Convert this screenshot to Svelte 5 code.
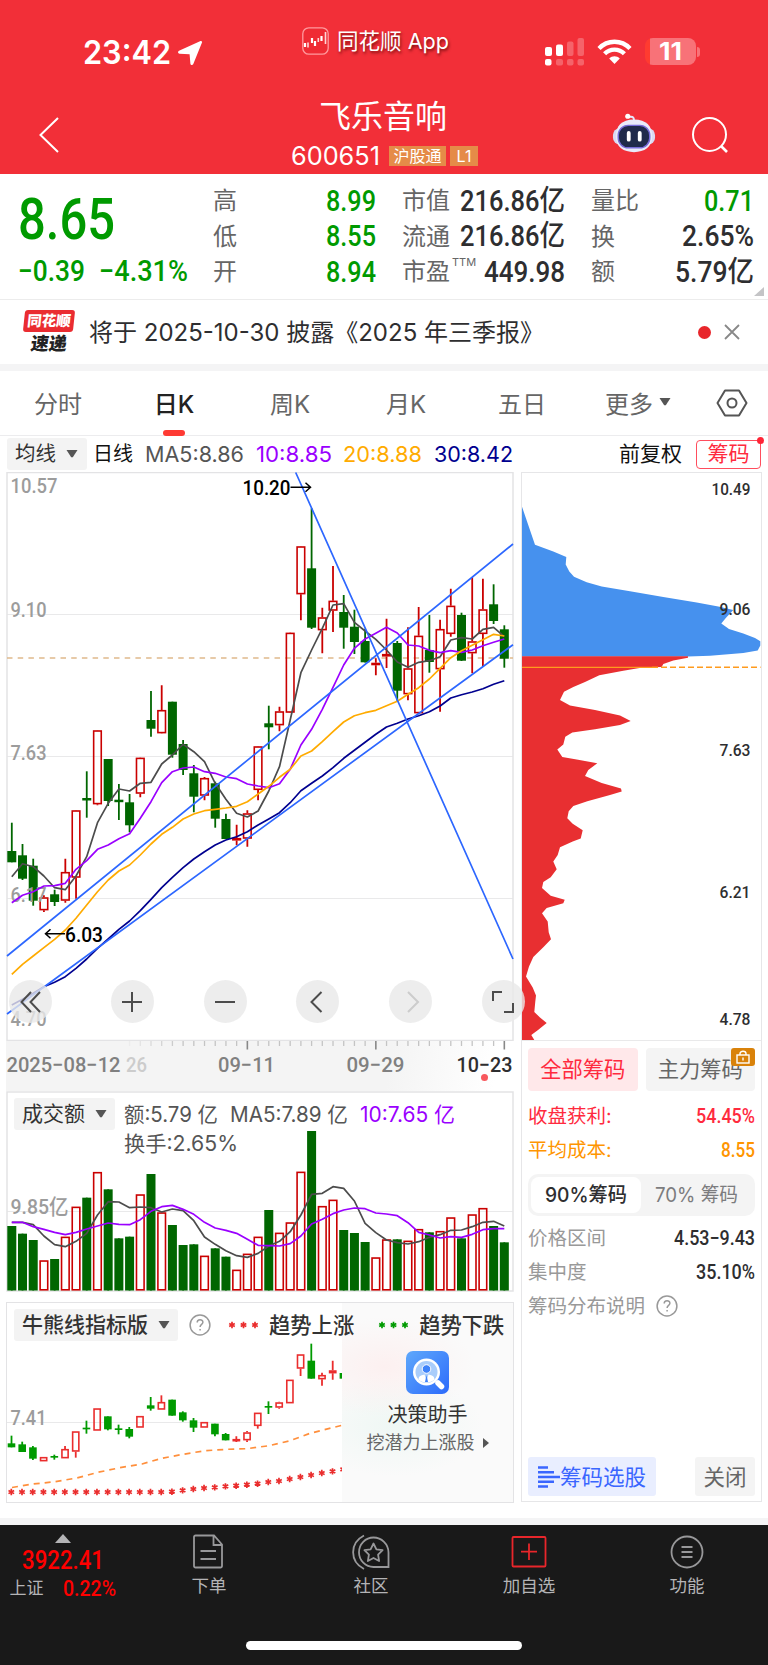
<script lang="ts">
  type Candle = [up: number, top: number, bottom: number, high: number, low: number];

  const STEP = 10.707;
  const xAt = (i: number) => 11.8 + i * STEP;
  const toLine = (values: number[]) =>
    values.map((v, i) => `${xAt(i).toFixed(1)},${v}`).join(' ');

  const stats = [
    [
      { label: '高', value: '8.99', width: 50, tone: 'down' },
      { label: '低', value: '8.55', width: 50, tone: 'down' },
      { label: '开', value: '8.94', width: 50, tone: 'down' }
    ],
    [
      { label: '市值', value: '216.86亿', width: 105, tone: 'ink' },
      { label: '流通', value: '216.86亿', width: 105, tone: 'ink' },
      { label: '市盈', sup: 'TTM', value: '449.98', width: 81, tone: 'ink' }
    ],
    [
      { label: '量比', value: '0.71', width: 50, tone: 'down' },
      { label: '换', value: '2.65%', width: 72, tone: 'ink' },
      { label: '额', value: '5.79亿', width: 79, tone: 'ink' }
    ]
  ];

  const tabs = ['分时', '日K', '周K', '月K', '五日'];
  let activeTab = $state('日K');

  // [up, body top, body bottom, high, low]
  const candles: Candle[] = [
    [0, 851, 862.3, 822.7, 862.3], [0, 855.3, 878.7, 844, 880], [0, 865.7, 900.7, 858.7, 905.7],
    [1, 897.3, 910.3, 895.3, 912], [0, 894.3, 902, 889.7, 906], [1, 872, 900.7, 858.7, 902.7],
    [1, 810.3, 877.7, 810, 898.7], [0, 798, 800.5, 771.3, 817.7], [1, 730.3, 804.3, 730, 805.3],
    [0, 759, 801, 759, 806], [0, 799.7, 802.2, 784, 820], [0, 802.3, 825.3, 794, 832.3],
    [1, 757.7, 793.7, 757.5, 797.3], [0, 720, 728.7, 691, 736.7], [1, 710, 733.3, 685.3, 733.5],
    [0, 701.7, 754.7, 701.7, 757.7], [0, 744, 770, 740, 775], [0, 773.3, 796.7, 765, 812.3],
    [1, 778, 795.7, 777, 800.3], [0, 783.3, 818.7, 781.7, 827.7], [0, 819, 839, 813.7, 839],
    [1, 838, 840.5, 824.7, 845.3], [1, 813.3, 838.7, 810.3, 846.7], [1, 746.3, 790, 746, 800.3],
    [0, 723.3, 727.3, 705.7, 749.3], [1, 711.3, 725.3, 706.7, 731.3], [1, 632.7, 712.7, 632.5, 713],
    [1, 546.3, 594.3, 546, 620.3], [0, 568.3, 627.7, 508.3, 629], [1, 617.3, 630.3, 607.7, 653.3],
    [1, 600.7, 610.7, 566, 632], [0, 612, 627.7, 595, 648.7], [0, 626.7, 642, 609.7, 654],
    [0, 641, 662.3, 628.7, 662.5], [1, 662.8, 665.2, 658.3, 675.3], [1, 654, 656.5, 618.7, 668],
    [0, 643, 690.7, 641, 700.7], [1, 668.3, 694.3, 627.3, 700.3], [1, 635.7, 713.3, 607, 714],
    [0, 650, 662, 615, 672.7], [1, 629, 669.3, 619.7, 711.7], [1, 605.7, 634, 588.7, 636.7],
    [0, 615, 660.7, 612.7, 661], [1, 641.3, 653.3, 577, 673.3], [1, 609.3, 634, 578.7, 666.7],
    [0, 604.3, 621, 584.3, 624], [0, 629.3, 658.7, 625.3, 667.7]
  ];

  const ma5 = [
    876.7, 863.7, 866.7, 876, 887.7, 889.7, 876, 856.7, 822.7, 803.3, 789, 791, 783.3, 782.3, 764,
    755, 744.3, 751.7, 761.7, 783.3, 799.3, 813.3, 817, 811, 791, 766.7, 720, 672.7, 650, 628.3, 605,
    603.7, 622.3, 631, 639.3, 650, 662, 667.3, 662.3, 660.7, 656.7, 640, 637.7, 639, 629.3, 627.3, 636.7
  ];
  const ma10 = [
    902.7, 895.3, 891.7, 886, 885.7, 883.3, 869.3, 860.7, 849.3, 845, 838.7, 833.7, 818.3, 801.7,
    782.7, 771.7, 768, 767, 771.7, 773.3, 777, 778.7, 784, 786, 787.7, 783.7, 769.3, 745, 729.3,
    709.3, 687.3, 665, 648.3, 639, 633.3, 627.3, 633, 645, 646, 650.3, 652.7, 650.7, 652.3, 650,
    645.7, 642.3, 639
  ];
  const ma20 = [
    974.3, 964.3, 956, 947.7, 939.3, 930, 918.3, 905, 891.7, 880, 871, 865, 855, 844, 834.3, 827.3,
    819, 814, 810.7, 809.3, 808, 806.3, 801.7, 794, 786.3, 777.3, 769.3, 756, 751, 741.7, 731.7, 722,
    715.7, 712.7, 710.3, 705.7, 701.3, 694.3, 687.7, 679, 668.3, 657.7, 650.7, 645.3, 639.7, 634.3, 636
  ];
  const ma30 = [
    1005, 999.3, 993.3, 986.7, 982.3, 976.7, 968.3, 959, 948.3, 939, 929.3, 921, 910.7, 899.3, 887.7,
    877.3, 867.7, 859, 851.7, 845, 840, 836.7, 831.7, 825, 819, 812.7, 802.7, 790.7, 783.3, 776,
    767.7, 758.3, 750.3, 742.3, 734.3, 727, 723.3, 719, 715.7, 711.7, 706, 698, 694.7, 692, 688.7,
    684.3, 680.7
  ];

  const priceTicks = [
    { text: '10.57', y: 486, w: 47 },
    { text: '9.10', y: 610, w: 36 },
    { text: '7.63', y: 752.5, w: 36 },
    { text: '6.17', y: 894.5, w: 36 },
    { text: '4.70', y: 1019, w: 36 }
  ];

  const volTops = [
    438, 461, 480, 541, 537, 470, 380, 353, 276, 328, 475, 470, 343, 282, 397, 435, 495, 493, 527,
    505, 530, 569, 521, 470, 390, 458, 427, 275, 153, 378, 359, 450, 459, 486, 532, 478, 478, 482,
    447, 457, 453, 412, 475, 403, 384, 438, 487
  ].map((v) => 1080 + v / 3);
  const volMa5 = [
    427, 427, 434, 468, 494, 500, 484, 460, 405, 365, 366, 383, 381, 383, 396, 387, 392, 422, 471,
    493, 512, 527, 532, 520, 498, 484, 455, 405, 343, 340, 320, 325, 363, 430, 458, 480, 488, 492,
    485, 472, 464, 451, 450, 440, 427, 424, 438
  ].map((v) => 1080 + v / 3);
  const volMa10 = [
    427, 427, 440, 448, 457, 464, 457, 447, 438, 429, 433, 434, 419, 394, 380, 376, 388, 403, 427,
    444, 451, 460, 478, 496, 497, 498, 491, 468, 432, 418, 401, 390, 384, 386, 399, 402, 407, 428,
    457, 465, 474, 470, 472, 463, 449, 446, 446
  ].map((v) => 1080 + v / 3);

  const trendCandles: Candle[] = (
    [
      [0, 445, 457, 422, 457], [0, 448, 471, 440, 471], [0, 457, 491, 453, 495],
      [1, 486, 499, 486, 499], [0, 483, 488, 479, 494], [1, 462, 490, 453, 490],
      [1, 409, 470, 409, 488], [0, 398, 403, 377, 416], [1, 340, 407, 340, 407],
      [0, 364, 403, 364, 406], [0, 400, 405, 389, 418], [0, 402, 425, 396, 430],
      [1, 363, 398, 363, 398], [0, 331, 341, 306, 347], [1, 321, 344, 301, 344],
      [0, 314, 362, 314, 362], [0, 352, 376, 349, 380], [0, 376, 398, 369, 411],
      [1, 381, 398, 381, 398], [0, 386, 418, 386, 424], [0, 417, 436, 414, 436],
      [1, 432, 437, 424, 441], [1, 412, 436, 408, 441], [1, 353, 393, 353, 401],
      [0, 333, 338, 319, 357], [1, 322, 338, 320, 341], [1, 254, 325, 254, 325],
      [1, 178, 221, 178, 243], [0, 197, 251, 146, 251], [1, 240, 253, 233, 272],
      [1, 226, 235, 197, 254], [0, 234, 251, 234, 251]
    ] as Candle[]
  ).map(([up, ...rest]) => [up, ...rest.map((v) => 1295 + v / 3)] as Candle);

  const starY = [
    ...Array(15).fill(589),
    588, 584, 580, 577, 575, 572, 570, 567, 564, 559, 556, 550, 544, 538, 532, 527, 521
  ].map((v) => 1295 + v / 3);

  const chipTicks = [
    { text: '10.49', y: 489.5, w: 39 },
    { text: '9.06', y: 608.7, w: 31 },
    { text: '7.63', y: 750.3, w: 31 },
    { text: '6.21', y: 892.5, w: 31 },
    { text: '4.78', y: 1018.8, w: 31 }
  ];

  const chipAbove =
    '0,506.7 13,544.7 31.3,551.4 44.3,556.9 43.7,564.4 47.3,571.6 52,576.7 64.7,582.2 79.7,586.6 108,591.3 141.3,596.9 174.7,602.4 196.3,606.4 211.3,609.9 204,617.8 199.3,623.4 207,628.9 221.3,633.6 233,638 238.3,641.2 238.3,645.5 235.7,650.6 221.3,653 188,655.8 165.7,656.6 0,656.6';
  const chipBelow =
    '0,656.2 166,656.2 166,657.8 151.3,660.5 141.3,664.1 139.7,666.9 122,667.2 101.3,670.8 77.3,675.2 63,681.9 51.3,687 42,691.8 38,700.1 48,705.6 73,710 98,715.5 108.7,721 98,725 73,729.3 50.3,732.5 43.3,736.8 41.3,744.4 35.3,749.5 40.3,757 54.7,759.4 75.3,763.3 66.3,770.1 63,776 79.7,783.1 99,788.6 99.7,791.4 88,795 65.3,801.3 51.3,806 46.7,811.2 45.3,818.3 50.7,823.8 60.7,830.2 58.7,838.5 50.7,841.6 38,847.2 35.7,855.1 31.3,861.4 34.7,869.3 28.7,877.2 21.3,882 20,887.9 28.7,895.8 42.7,899.8 41.3,903.3 24.7,908.1 20,913.2 25.7,921.5 26.7,932.2 29,939.3 21.3,947.2 11.3,957.1 7,966.6 4,976.5 10.7,987.5 14,995.4 13.3,1001.4 12.3,1012 18,1017.6 24.7,1023.1 15.7,1030.2 9.3,1035 12.3,1040 0,1040';
</script>

<!-- Text squeezed or stretched to a set width, so that digits keep their columns -->
{#snippet fit(text: string, width: number, size: number, tone: string, face = 'din')}
  <svg class="fit" {width} height={Math.round(size * 1.2)}>
    <text
      class="{face} {tone}"
      x="0"
      y={Math.round(size * 1.2) / 2 + size * 0.36}
      font-size={size}
      textLength={width}
      lengthAdjust="spacingAndGlyphs">{text}</text>
  </svg>
{/snippet}

{#snippet candle(c: Candle, x: number, red: string, green: string, w: number)}
  {#if c[0]}
    <path d="M{x} {c[3]}V{c[1]}M{x} {c[2]}V{c[4]}" stroke={red} stroke-width="1.8" />
    <rect
      x={x - w / 2 + 0.7}
      y={c[1] + 0.7}
      width={w - 1.4}
      height={Math.max(c[2] - c[1] - 1.4, 1)}
      fill="none"
      stroke={red}
      stroke-width="1.6"
    />
  {:else}
    <path d="M{x} {c[3]}V{c[4]}" stroke={green} stroke-width="1.8" />
    <rect x={x - w / 2} y={c[1]} width={w} height={c[2] - c[1]} fill={green} />
  {/if}
{/snippet}

{#snippet star(x: number, y: number, color: string)}
  <path
    d="M{x} {y - 3.2}v6.4M{x - 2.8} {y - 1.6}l5.6 3.2M{x - 2.8} {y + 1.6}l5.6 -3.2"
    stroke={color}
    stroke-width="1.7"
  />
{/snippet}

{#snippet help()}
  <svg class="help" width="22" height="22" viewBox="0 0 22 22">
    <circle cx="11" cy="11" r="9.9" />
    <path d="M8.2 8.6c0-3.8 5.7-3.7 5.7-.3 0 2-2.8 2.2-2.8 4.6M11.1 15v1.6" />
  </svg>
{/snippet}

{#snippet caret()}
  <svg width="12" height="8" viewBox="0 0 12 8"><path d="M.5 0h11L6.8 7.2h-1.6z" fill="#555" /></svg>
{/snippet}

<div class="app">
  <header class="top">
    <div class="status">
      <div class="status__time">
        {@render fit('23:42', 88, 32, 'white', 'semi')}
        <svg width="26" height="26" viewBox="0 0 26 26">
          <path d="M24.5 1.2c.6.2.7.9.5 1.4L16.3 24c-.6 1.5-2.7 1.3-2.9-.3l-.8-9.5-10.1-.5c-1.7-.2-2-2.2-.5-2.9L23 1.2c.5-.2 1-.3 1.5 0z" fill="#fff" />
        </svg>
      </div>
      <div class="status__app">
        <svg width="27" height="28" viewBox="0 0 27 28">
          <rect x=".8" y=".8" width="25.4" height="26.4" rx="6" fill="#ef2b34" stroke="#ff9a9e" stroke-width="1.3" />
          <path d="M3 16v4M10 11v5M13 14v5M19.5 9v5" stroke="#fff" stroke-width="2.2" />
          <path d="M6 15.5v5M16.3 11v4M23.5 5v12" stroke="#ffd5d6" stroke-width="1.6" />
        </svg>
        {@render fit('同花顺 App', 112, 22, 'white shadow', 'sans')}
      </div>
      <div class="status__right">
        <svg width="40" height="28" viewBox="0 0 40 28" fill="#fff">
          <rect x="0" y="9" width="7" height="9" rx="2" />
          <rect x="11" y="6.5" width="7" height="11.5" rx="2" />
          <g opacity=".25">
            <rect x="22" y="3.5" width="6.5" height="14.5" rx="2" />
            <rect x="32.5" y="0" width="6.5" height="18" rx="2" />
            <rect x="11" y="21" width="7" height="6.5" rx="2" />
            <rect x="22" y="21" width="6.5" height="6.5" rx="2" />
            <rect x="32.5" y="21" width="6.5" height="6.5" rx="2" />
          </g>
          <rect x="0" y="21" width="6.5" height="6.5" rx="2" />
        </svg>
        <svg class="wifi" width="35" height="25" viewBox="0 0 35 25" fill="none" stroke="#fff" stroke-width="4.3">
          <path d="M2 9.4C10.5.5 24.5.5 33 9.4" />
          <path d="M7.6 14.8c5.4-5.6 14.400-5.600 19.800 0" />
          <path d="M17.5 25l-5.3-5.5c3-2.9 7.6-2.9 10.6 0z" fill="#fff" stroke="none" />
        </svg>
        <div class="battery">
          <span class="battery__level"></span>
          {@render fit('11', 23, 24, 'white', 'heavy')}
        </div>
        <span class="battery__nub"></span>
      </div>
    </div>

    <div class="titlebar">
      <svg class="titlebar__back" width="20" height="36" viewBox="0 0 20 36" fill="none" stroke="#fff" stroke-width="2">
        <path d="M19 1L1.5 18 19 35" />
      </svg>
      <div class="titlebar__name">
        <h1>飞乐音响</h1>
        <div class="titlebar__code">
          {@render fit('600651', 89, 25, 'white', 'sans')}
          <span class="tag tag--wide">沪股通</span>
          <span class="tag">L1</span>
        </div>
      </div>
      <svg class="titlebar__bot" width="44" height="42" viewBox="0 0 46 42">
        <path d="M17 4.5c6-2 6 2 6 4" fill="none" stroke="#e5e6fa" stroke-width="2" />
        <circle cx="16.5" cy="3.5" r="2.7" fill="#fff" />
        <rect x="1" y="16" width="44" height="17" rx="7" fill="#dad9f3" />
        <path d="M23 7c13 0 19 7 19 17.500C42 36 34 41 23 41S4 36 4 24.500C4 14 10 7 23 7z" fill="#e9eaf9" />
        <rect x="6.5" y="13" width="33" height="23.5" rx="10.5" fill="#202a4a" stroke="#776bd8" stroke-width="1.5" />
        <path d="M17.5 21v7M29 21v7" stroke="#fff" stroke-width="4" stroke-linecap="round" />
      </svg>
      <svg class="titlebar__search" width="38" height="38" viewBox="0 0 38 38" fill="none" stroke="#fff" stroke-width="2">
        <circle cx="18.5" cy="18.5" r="16.5" />
        <path d="M30 30l6 6" stroke-width="2.6" />
      </svg>
    </div>
  </header>

  <section class="quote">
    <div class="quote__price">
      {@render fit('8.65', 97, 58, 'down')}
      <div class="quote__change">
        {@render fit('−0.39', 67, 29, 'down')}
        {@render fit('−4.31%', 89, 29, 'down')}
      </div>
    </div>
    {#each stats as column}
      <div class="quote__column">
        {#each column as stat}
          <div class="quote__row">
            <span>{stat.label}{#if stat.sup}<sup>{stat.sup}</sup>{/if}</span>
            {@render fit(stat.value, stat.width, 29, stat.tone)}
          </div>
        {/each}
      </div>
    {/each}
    <i class="quote__corner"></i>
  </section>

  <section class="news">
    <div class="news__logo">
      <b>同花顺</b>
      <em>速递</em>
    </div>
    {@render fit('将于 2025-10-30 披露《2025 年三季报》', 455, 24, 'ink', 'sans')}
    <i class="news__dot"></i>
    <svg width="16" height="16" viewBox="0 0 16 16" stroke="#888" stroke-width="1.8"><path d="M1 1l14 14M15 1L1 15" /></svg>
  </section>

  <nav class="tabs">
    {#each tabs as tab}
      <button type="button" class:active={tab === activeTab} onclick={() => (activeTab = tab)}>{tab}</button>
    {/each}
    <button type="button" class="tabs__more">更多{@render caret()}</button>
    <svg class="tabs__settings" width="32" height="28" viewBox="0 0 32 28" fill="none" stroke="#555" stroke-width="2">
      <path d="M9 1.5h14L30.5 14 23 26.5H9L1.5 14z" stroke-linejoin="round" />
      <circle cx="16" cy="14" r="4.5" />
    </svg>
  </nav>

  <div class="legend">
    <button type="button" class="picker">均线{@render caret()}</button>
    <span class="legend__period">日线</span>
    {@render fit('MA5:8.86', 99, 21, 'gray', 'inter')}
    {@render fit('10:8.85', 76, 21, 'purple', 'inter')}
    {@render fit('20:8.88', 79, 21, 'amber', 'inter')}
    {@render fit('30:8.42', 79, 21, 'navy', 'inter')}
    <span class="legend__adjust">前复权</span>
    <button type="button" class="legend__chips">筹码</button>
  </div>

  <main class="charts">
    <div class="charts__left">
      <div class="kline">
        <svg width="508" height="569" viewBox="6 472 508 569" fill="none">
          <path d="M7 614.5H513M7 756.5H513M7 898.5H513" stroke="#e9e9ea" />
          <path d="M7 472.5H513V1040.5H7Z" stroke="#e3e3e5" stroke-width="1.5" />
          <path d="M7 658H513" stroke="#dfb98c" stroke-width="1.3" stroke-dasharray="5.5 5.2" />
          {#each candles as c, i}
            {@render candle(c, xAt(i), '#ca0000', '#006600', 9)}
          {/each}
          {#each priceTicks as t}
            <text class="din tick" x="10.5" y={t.y + 7.3} font-size="20.5" textLength={t.w} lengthAdjust="spacingAndGlyphs">{t.text}</text>
          {/each}
          <g stroke-width="1.7" stroke-linejoin="round">
            <polyline points={toLine(ma5)} stroke="#4c4c4c" />
            <polyline points={toLine(ma10)} stroke="#9a00ff" />
            <polyline points={toLine(ma20)} stroke="#ffab00" />
            <polyline points={toLine(ma30)} stroke="#00008f" />
            <path d="M7 956L513 544M7 1014L513 644.7M295.7 472.5L513 959" stroke="#2d67ff" />
          </g>
          <text class="din black" x="242.5" y="494.5" font-size="20.5" textLength="48" lengthAdjust="spacingAndGlyphs">10.20</text>
          <text class="din black" x="65" y="941.5" font-size="20.5" textLength="38" lengthAdjust="spacingAndGlyphs">6.03</text>
          <path d="M290.5 487.3h20m-5-4.5l5 4.500-5 4.500M65 933.700H45.500m5-4.500l-5 4.500 5 4.500" stroke="#000" stroke-width="1.5" />
        </svg>
        <div class="kline__tools">
          <button type="button" aria-label="后退">
            <svg width="24" height="24" viewBox="0 0 24 24"><path d="M12 2L2.500 12 12 22M21 2l-9.500 10L21 22" /></svg>
          </button>
          <button type="button" aria-label="放大">
            <svg width="24" height="24" viewBox="0 0 24 24"><path d="M2 12h20M12 2v20" /></svg>
          </button>
          <button type="button" aria-label="缩小">
            <svg width="24" height="24" viewBox="0 0 24 24"><path d="M2 12h20" /></svg>
          </button>
          <button type="button" aria-label="左移">
            <svg width="24" height="24" viewBox="0 0 24 24"><path d="M15.5 2L5.5 12l10 10" /></svg>
          </button>
          <button type="button" aria-label="右移" disabled>
            <svg width="24" height="24" viewBox="0 0 24 24"><path d="M9 2l10 10L9 22" /></svg>
          </button>
          <button type="button" aria-label="全屏">
            <svg width="24" height="24" viewBox="0 0 24 24"><path d="M2 11V2h9M22 13v9h-9" /></svg>
          </button>
        </div>
      </div>

      <div class="axis">
        <svg width="508" height="50" viewBox="6 1041 508 50" fill="none">
          {#each candles as _, i}
            {#if i > 10}
              {@const major = i === 22 || i === 34 || i === 46}
              <path
                d="M{xAt(i)} 1041v{major ? 8.5 : 5}"
                stroke={major ? '#888' : '#c4c4c4'}
                stroke-width={major ? 1.6 : 1.3}
                opacity={Math.min(1, (i - 10) / 6)}
              />
            {/if}
          {/each}
          <g class="din" font-size="21">
            <text x="6.5" y="1072" fill="#808080" textLength="114" lengthAdjust="spacingAndGlyphs">2025−08−12</text>
            <text x="126" y="1072" fill="#ccc" textLength="21" lengthAdjust="spacingAndGlyphs">26</text>
            <text x="218" y="1072" fill="#808080" textLength="57" lengthAdjust="spacingAndGlyphs">09−11</text>
            <text x="346.5" y="1072" fill="#808080" textLength="58" lengthAdjust="spacingAndGlyphs">09−29</text>
            <text x="456.5" y="1072" class="ink" textLength="56" lengthAdjust="spacingAndGlyphs">10−23</text>
          </g>
          <circle cx="484.5" cy="1077.5" r="3.5" fill="#f8585d" />
        </svg>
      </div>

      <div class="volume">
        <svg width="508" height="201" viewBox="6 1091 508 201" fill="none">
          <path d="M7 1211.5H513" stroke="#e9e9ea" />
          <path d="M7 1092H513V1291H7Z" stroke="#e3e3e5" stroke-width="1.5" />
          {#each volTops as top, i}
            {@render candle([candles[i][0], top, 1290.5, top, 1290.5], xAt(i), '#ca0000', '#006600', 9)}
          {/each}
          <g stroke-width="1.7" stroke-linejoin="round">
            <polyline points={toLine(volMa5)} stroke="#4c4c4c" />
            <polyline points={toLine(volMa10)} stroke="#9a00ff" />
          </g>
          <text class="din tick" x="10.5" y="1213.5" font-size="21" textLength="58" lengthAdjust="spacingAndGlyphs">9.85亿</text>
        </svg>
        <div class="volume__head">
          <button type="button" class="picker">成交额{@render caret()}</button>
          <div class="volume__values">
            {@render fit('额:5.79 亿', 94, 21, 'gray', 'inter')}
            {@render fit('MA5:7.89 亿', 118, 21, 'gray', 'inter')}
            {@render fit('10:7.65 亿', 95, 21, 'purple', 'inter')}
            {@render fit('换手:2.65%', 114, 21, 'gray', 'inter')}
          </div>
        </div>
      </div>

      <div class="trend">
        <svg width="508" height="201" viewBox="6 1302 508 201" fill="none">
          <path d="M7 1422.5H342" stroke="#e9e9ea" />
          <svg x="6" y="1302" width="336" height="201" viewBox="6 1302 336 201">
            {#each trendCandles as c, i}
              {@render candle(c, xAt(i) - 0.3, '#ea2d2d', '#009a00', 7.6)}
            {/each}
            <polyline
              points="12,1487.5 33,1484 55,1481.7 77,1478 98,1472.3 120,1467.7 142,1464 162,1458.3 183,1454.3 205,1450.7 227,1449.3 247,1448.7 269,1445.7 290,1440.7 310,1433.3 342,1425.3"
              stroke="#ff8f3c"
              stroke-width="1.7"
              stroke-dasharray="6 5"
            />
            {#each starY as y, i}
              {@render star(xAt(i) - 0.5, y + 0.7, '#ea2d2d')}
            {/each}
          </svg>
          <text class="din tick" x="10.5" y="1424.5" font-size="20.5" textLength="36" lengthAdjust="spacingAndGlyphs">7.41</text>
        </svg>
        <div class="helper">
          <svg width="43" height="43" viewBox="0 0 43 43">
            <defs>
              <linearGradient id="helper-bg" x1="0" y1="0" x2="1" y2="1">
                <stop offset="0" stop-color="#5fa8fb" />
                <stop offset="1" stop-color="#2c6bfb" />
              </linearGradient>
            </defs>
            <rect width="43" height="43" rx="7" fill="url(#helper-bg)" />
            <path d="M32 32l3.500 3.500" stroke="#fff" stroke-width="5.5" stroke-linecap="round" />
            <circle cx="20.5" cy="21" r="13.5" fill="#fff" />
            <circle cx="20.5" cy="21" r="11" fill="#a9cdfb" />
            <circle cx="20.5" cy="18" r="4.3" fill="#3f83fa" stroke="#fff" />
            <path d="M12.5 28.5c0-4 4-4.500 6-5l2 6 2-6c2 .5 6 1 6 5-4 4-12 4-16 0z" fill="#fff" />
            <path d="M20.5 24l1.5 7h-3z" fill="#3f83fa" />
          </svg>
          <strong>决策助手</strong>
          <span>挖潜力上涨股<i></i></span>
        </div>
        <div class="trend__head">
          <button type="button" class="picker">牛熊线指标版{@render caret()}</button>
          {@render help()}
          <svg class="stars" width="30" height="10">
            {#each [4, 15.5, 27] as x}{@render star(x, 5, '#ea2d2d')}{/each}
          </svg>
          <span>趋势上涨</span>
          <svg class="stars stars--down" width="30" height="10">
            {#each [4, 15.5, 27] as x}{@render star(x, 5, '#009a00')}{/each}
          </svg>
          <span>趋势下跌</span>
        </div>
      </div>
    </div>

    <aside class="chips">
      <svg class="chips__chart" width="239" height="567" viewBox="0 473 239 567">
        <polygon points={chipAbove} fill="#4691ee" />
        <polygon points={chipBelow} fill="#e82f31" />
        <path d="M0 667.3H130" stroke="#ff9b1e" stroke-width="1.3" />
        <path d="M130 667.3H238.5" stroke="#ff9b1e" stroke-width="1.6" stroke-dasharray="6 3" />
        {#each chipTicks as t}
          <text class="din ink" x={228.5 - t.w} y={t.y + 5.9} font-size="16.5" textLength={t.w} lengthAdjust="spacingAndGlyphs">{t.text}</text>
        {/each}
      </svg>
      <div class="chips__panel">
        <div class="chips__tabs">
          <button type="button" class="active">全部筹码</button>
          <button type="button">
            主力筹码
            <span class="lock">
              <svg width="14" height="14" viewBox="0 0 14 14" fill="none" stroke="#fff" stroke-width="1.4">
                <rect x="1" y="5" width="12" height="8" />
                <path d="M4 5V3.5C4 .5 10 .5 10 3.5V5M7 7.5v3" />
              </svg>
            </span>
          </button>
        </div>
        <div class="chips__row chips__row--red">收盘获利:{@render fit('54.45%', 59, 20, 'red')}</div>
        <div class="chips__row chips__row--orange">平均成本:{@render fit('8.55', 34, 20, 'orange')}</div>
        <div class="segment">
          <button type="button" class="active">{@render fit('90%筹码', 82, 20, 'ink bold', 'inter')}</button>
          <button type="button">{@render fit('70% 筹码', 83, 20, 'mid', 'inter')}</button>
        </div>
        <div class="chips__row">价格区间{@render fit('4.53−9.43', 81, 20, 'ink')}</div>
        <div class="chips__row">集中度{@render fit('35.10%', 59, 20, 'ink')}</div>
        <div class="chips__row chips__row--help">筹码分布说明{@render help()}</div>
        <div class="chips__foot">
          <button type="button" class="pick">
            <svg width="22" height="22" viewBox="0 0 22 22" stroke="#3a66ff" stroke-width="2.6">
              <path d="M0 1.5h10M0 6.3h16M0 11h22M0 15.7h16M0 20.5h10" />
            </svg>
            筹码选股
          </button>
          <button type="button" class="close">关闭</button>
        </div>
      </div>
    </aside>
  </main>

  <footer class="bottom">
    <div class="index">
      <i></i>
      {@render fit('3922.41', 82, 25, 'bright')}
      <div class="index__row">
        <span>上证</span>
        {@render fit('0.22%', 53, 22, 'bright')}
      </div>
    </div>
    <div class="bottom__item">
      <svg width="36" height="36" viewBox="0 0 36 36">
        <path d="M4.5 1.5h18.500l8 9v21.500a1.500 1.500 0 01-1.500 1.500H4.500a1.500 1.500 0 01-1.500-1.500V3a1.500 1.500 0 011.500-1.500zM22.500 2v9h8.500M9.500 17h15.500M9.500 25h15.500" />
      </svg>
      <span>下单</span>
    </div>
    <div class="bottom__item">
      <svg width="38" height="36" viewBox="0 0 38 36">
        <path d="M21.5 3.5c8 0 15 6.500 15 15v14.500h-15c-8 0-14.500-6.500-14.500-14.700S13.500 3.500 21.500 3.500zM12 1.500C-2.500 9 -2.500 27.500 12 35" />
        <path d="M21.5 9.500l2.900 5.800 6.200.9-4.500 4.500 1 6.300-5.600-3-5.600 3 1-6.300-4.500-4.500 6.200-.9z" stroke-linejoin="round" />
      </svg>
      <span>社区</span>
    </div>
    <div class="bottom__item bottom__item--add">
      <svg width="36" height="36" viewBox="0 0 36 36">
        <rect x="1.5" y="3" width="33" height="29.5" rx="1" />
        <path d="M18 9.5v16.500M10 17.700h16" />
      </svg>
      <span>加自选</span>
    </div>
    <div class="bottom__item">
      <svg width="36" height="36" viewBox="0 0 36 36">
        <circle cx="18" cy="18" r="15.5" />
        <path d="M12.5 13h11M12.500 18h11M12.500 23h11" />
      </svg>
      <span>功能</span>
    </div>
    <div class="bottom__home"></div>
  </footer>
</div>

<style>
  :global(body) {
    margin: 0;
    background: #fff;
  }

  .app {
    width: 768px;
    height: 1665px;
    overflow: hidden;
    background: #fff;
    color: #333;
    font-family: Inter, 'Noto Sans CJK SC', sans-serif;
  }

  svg {
    display: block;
    flex: none;
  }

  .fit,
  .axis svg {
    overflow: visible;
  }

  button {
    padding: 0;
    border: 0;
    background: none;
    color: inherit;
    font: inherit;
    white-space: nowrap;
  }

  .din {
    font-family: Roboto, 'Noto Sans CJK SC', sans-serif;
    font-weight: 500;
  }

  .sans,
  .inter {
    font-family: Inter, 'Noto Sans CJK SC', sans-serif;
  }

  .semi,
  .heavy {
    font-family: Inter, sans-serif;
    font-weight: 600;
  }

  .heavy {
    font-weight: 700;
  }

  .white { fill: #fff; }
  .shadow { text-shadow: 1px 2px 3px rgba(70, 0, 0, 0.7); }
  .down { fill: #009a00; }
  .ink { fill: #2e2e30; }
  .gray { fill: #555; }
  .mid { fill: #7c7c7e; }
  .black { fill: #000; }
  .purple { fill: #9a00ff; }
  .amber { fill: #ffab00; }
  .navy { fill: #00008f; }
  .red { fill: #ff2a3e; }
  .orange { fill: #ff9500; }
  .bright { fill: #fe0000; }
  .bold { font-weight: 500; }
  .tick { fill: #9c9c9c; }

  .top {
    height: 174px;
    background: #f22f38;
    color: #fff;
  }

  .status {
    display: flex;
    height: 90px;
    padding: 0 68px 0 83px;
  }

  .status__time {
    display: flex;
    width: 219px;
    gap: 6px;
    padding-top: 33px;
  }

  .status__time > svg:last-child {
    margin-top: 7px;
  }

  .status__app {
    display: flex;
    align-items: center;
    width: 243px;
    height: 28px;
    gap: 8px;
    margin-top: 27px;
  }

  .status__right {
    display: flex;
    height: 28px;
    margin-top: 38px;
  }

  .wifi {
    margin: 1px 13px 0 12px;
  }

  .battery {
    display: flex;
    align-items: center;
    justify-content: center;
    width: 51px;
    height: 27px;
    border-radius: 8px;
    background: linear-gradient(90deg, #ff3b30 5px, #f87278 5px);
  }

  .battery__nub {
    width: 3px;
    height: 10px;
    margin: 9px 0 0 1px;
    border-radius: 0 3px 3px 0;
    background: #f87278;
  }

  .titlebar {
    display: flex;
    height: 84px;
    padding-left: 39px;
  }

  .titlebar__back {
    margin: 27px 232px 0 0;
  }

  .titlebar__name {
    display: flex;
    flex-direction: column;
    width: 321px;
  }

  h1 {
    margin: 4px 0 0 28px;
    font-size: 32px;
    font-weight: 400;
    line-height: 46px;
  }

  .titlebar__code {
    display: flex;
    align-items: center;
    height: 30px;
    margin-top: 1px;
  }

  .tag {
    width: 28px;
    height: 20px;
    margin-left: 4px;
    background: #e58b48;
    font-size: 16px;
    line-height: 20px;
    text-align: center;
  }

  .tag--wide {
    width: 57px;
    margin-left: 9px;
  }

  .titlebar__bot {
    margin-top: 22px;
  }

  .titlebar__search {
    margin: 26px 0 0 35px;
  }

  .quote {
    position: relative;
    display: flex;
    height: 125px;
    gap: 26px;
    padding-left: 18px;
    border-bottom: 1px solid #ececec;
  }

  .quote__price {
    width: 169px;
    padding-top: 9px;
  }

  .quote__change {
    display: flex;
    gap: 14px;
  }

  .quote__column {
    width: 163px;
    padding-top: 9px;
  }

  .quote__row {
    display: flex;
    justify-content: space-between;
    align-items: center;
    height: 35.6px;
    color: #666;
    font-size: 24px;
    line-height: 35px;
  }

  .quote__row :global(.fit) {
    margin-top: -1px;
  }

  .quote__row span {
    white-space: nowrap;
  }

  .quote__row sup {
    position: relative;
    top: -14px;
    margin-left: 2px;
    font-size: 11px;
    line-height: 0;
    vertical-align: baseline;
  }

  .quote__corner {
    position: absolute;
    right: 4px;
    bottom: 3px;
    border-left: 10px solid transparent;
    border-bottom: 9px solid #c4c4c6;
  }

  .news {
    display: flex;
    align-items: center;
    height: 64px;
    padding: 0 28px 0 22px;
    border-bottom: 7px solid #f4f4f5;
  }

  .news__logo {
    display: flex;
    flex-direction: column;
    align-items: center;
    width: 54px;
    margin-right: 13px;
  }

  .news__logo b {
    width: 50px;
    height: 22px;
    border-radius: 3px;
    background: #ea2c31;
    color: #fff;
    font-size: 14.5px;
    font-weight: 900;
    line-height: 21px;
    text-align: center;
    transform: skewX(-6deg);
  }

  .news__logo em {
    color: #222;
    font-size: 18px;
    font-style: normal;
    font-weight: 900;
    line-height: 23px;
    transform: skewX(-8deg);
  }

  .news__dot {
    width: 13px;
    height: 13px;
    margin: 0 13px 0 auto;
    border-radius: 50%;
    background: #e8262b;
  }

  .tabs {
    display: flex;
    align-items: center;
    height: 64px;
    border-bottom: 1px solid #ececee;
    color: #666;
    font-size: 24px;
  }

  .tabs button {
    position: relative;
    width: 116px;
    height: 64px;
    padding-bottom: 2px;
  }

  .tabs button.active {
    color: #222;
    font-weight: 500;
  }

  .tabs button.active::after {
    content: '';
    position: absolute;
    bottom: -1px;
    left: 47px;
    width: 22px;
    height: 6px;
    border-radius: 3px;
    background: #fe3a33;
  }

  .tabs .tabs__more {
    display: flex;
    align-items: center;
    gap: 6px;
    width: 112px;
    padding-left: 25px;
  }

  .tabs__settings {
    margin-left: 24px;
  }

  .legend {
    display: flex;
    align-items: center;
    height: 36px;
    padding: 0 7px;
    font-size: 20px;
  }

  .picker {
    display: flex;
    flex: none;
    align-items: center;
    height: 32px;
    gap: 10px;
    padding: 0 8px;
    border-radius: 3px;
    background: #f3f3f3;
    color: #333;
    font-size: 21px;
    line-height: 30px;
  }

  .legend .picker {
    padding: 0 9px 0 8px;
    font-size: 20.5px;
  }

  .legend__period {
    margin: 0 12px 0 6px;
    color: #111;
    line-height: 32px;
  }

  .legend :global(.fit) {
    margin-right: 11.5px;
  }

  .legend__adjust {
    margin-left: auto;
    color: #111;
    font-size: 21px;
    line-height: 32px;
  }

  .legend__chips {
    position: relative;
    width: 65px;
    height: 29px;
    margin-left: 14px;
    border: 1px solid #ff4d5d;
    border-radius: 4px;
    color: #ff2a3e;
    font-size: 21px;
    line-height: 26px;
  }

  .legend__chips::after {
    content: '';
    position: absolute;
    top: -4px;
    right: -4px;
    width: 7px;
    height: 7px;
    border-radius: 50%;
    background: #ff2436;
  }

  .charts {
    display: flex;
    height: 1031px;
    gap: 7px;
    padding-left: 6px;
  }

  .charts__left {
    width: 508px;
  }

  .kline {
    position: relative;
    height: 569px;
  }

  .kline__tools {
    position: absolute;
    left: 3px;
    bottom: 18px;
    z-index: 1;
    display: flex;
    justify-content: space-between;
    width: 516px;
  }

  .kline__tools button {
    display: grid;
    place-items: center;
    width: 43px;
    height: 43px;
    border-radius: 50%;
    background: rgba(232, 232, 232, 0.8);
  }

  .kline__tools button:first-child {
    margin-right: 9px;
  }

  .kline__tools path {
    fill: none;
    stroke: #4c4c4c;
    stroke-width: 2;
  }

  .kline__tools button:disabled path {
    stroke: #ccc;
  }

  .axis {
    height: 50px;
    background: linear-gradient(100deg, #f4f4f4 75%, #fff 96%);
  }

  .volume,
  .trend {
    position: relative;
    height: 201px;
  }

  .trend {
    margin-top: 10px;
  }

  .trend::after {
    content: '';
    position: absolute;
    inset: 0 0 0 0;
    border: 1.5px solid #e3e3e5;
    pointer-events: none;
  }

  .volume__head,
  .trend__head {
    position: absolute;
    top: 7px;
    left: 8px;
    display: flex;
  }

  .volume__values {
    display: flex;
    flex-wrap: wrap;
    gap: 4px 12px;
    width: 370px;
    padding: 4px 0 0 9px;
  }

  .trend__head {
    z-index: 1;
    align-items: center;
    color: #333;
    font-size: 21.3px;
    font-weight: 500;
    line-height: 32px;
    white-space: nowrap;
  }

  .trend__head .help {
    margin: 0 17px 0 11px;
  }

  .help {
    fill: none;
    stroke: #999;
    stroke-width: 1.5;
  }

  .stars {
    margin-right: 11px;
  }

  .stars--down {
    margin-left: 24px;
  }

  .helper {
    position: absolute;
    top: 1px;
    right: 1px;
    display: flex;
    flex-direction: column;
    align-items: center;
    width: 171px;
    height: 199px;
    padding-top: 48px;
    box-sizing: border-box;
    background:
      radial-gradient(ellipse 90px 50px at 25% 32%, rgba(255, 228, 228, 0.45), transparent),
      radial-gradient(ellipse 90px 50px at 30% 62%, rgba(222, 243, 235, 0.4), transparent),
      #fafafa;
  }

  .helper strong {
    margin-top: 6px;
    font-size: 20px;
    font-weight: 400;
    line-height: 30px;
  }

  .helper span {
    display: flex;
    align-items: center;
    gap: 8px;
    color: #666;
    font-size: 18px;
    line-height: 25px;
  }

  .helper i {
    border: 5px solid transparent;
    border-left: 6px solid #555;
    border-right: 0;
  }

  .chips {
    width: 241px;
    height: 1030px;
    box-sizing: border-box;
    border: 1px solid #e6e6e8;
  }

  .chips__chart {
    border-bottom: 1px solid #e9e9ea;
  }

  .chips__panel {
    display: flex;
    flex-direction: column;
    height: 460px;
    padding: 7px 6px 5px;
    box-sizing: border-box;
  }

  .chips__tabs {
    display: flex;
    gap: 8px;
    margin-bottom: 8px;
  }

  .chips__tabs button {
    position: relative;
    width: 110px;
    height: 43px;
    padding-bottom: 4px;
    border-radius: 4px;
    background: #f4f4f4;
    color: #666;
    font-size: 21.3px;
  }

  .chips__tabs button.active {
    background: #ffe8ea;
    color: #ff2a3e;
  }

  .lock {
    position: absolute;
    top: 0;
    right: 0;
    display: grid;
    place-items: center;
    width: 24px;
    height: 18px;
    border-radius: 3px;
    background: #d9820a;
  }

  .chips__row {
    display: flex;
    justify-content: space-between;
    align-items: center;
    height: 34px;
    color: #999;
    font-size: 19.5px;
    line-height: 30px;
    padding-bottom: 0;
  }

  .chips__row--red { color: #ff2a3e; }
  .chips__row--orange { color: #ff9500; }

  .chips__row--help {
    justify-content: flex-start;
    gap: 11px;
  }

  .segment {
    display: flex;
    height: 42px;
    margin: 7px 0 5px;
    padding: 3px;
    box-sizing: border-box;
    border-radius: 10px;
    background: #f4f4f4;
  }

  .segment button {
    display: grid;
    place-items: center;
    width: 110px;
    border-radius: 8px;
  }

  .segment .active {
    background: #fff;
  }

  .chips__foot {
    display: flex;
    justify-content: space-between;
    margin-top: auto;
  }

  .chips__foot button {
    height: 39px;
    padding-bottom: 3px;
    border-radius: 3px;
    font-size: 21.5px;
  }

  .chips__foot .pick {
    display: flex;
    align-items: center;
    width: 128px;
    padding-left: 10px;
    box-sizing: border-box;
    background: #e9eeff;
    color: #3a66ff;
  }

  .pick svg {
    margin-top: 3px;
  }

  .close {
    width: 60px;
    background: #f4f4f4;
    color: #666;
  }

  .bottom {
    display: grid;
    grid-template-columns: 125px 168px 156px 160px 156px;
    grid-template-rows: 106px 1fr;
    height: 140px;
    margin-top: 15px;
    border-top: 7px solid #f4f4f5;
    background: #191919;
    color: #b4b4b6;
  }

  .index {
    display: flex;
    flex-direction: column;
    align-items: center;
    padding-top: 9px;
    box-sizing: border-box;
  }

  .index i {
    margin-bottom: 2px;
    border: 8px solid transparent;
    border-top: 0;
    border-bottom: 9px solid #b4b4b6;
  }

  .index__row {
    display: flex;
    align-items: center;
    gap: 19px;
    font-size: 17px;
    line-height: 26px;
  }

  .bottom__item {
    display: flex;
    flex-direction: column;
    align-items: center;
    padding-top: 9px;
    font-size: 17.5px;
    line-height: 26px;
  }

  .bottom__item span {
    margin-top: 3px;
  }

  .bottom__item svg {
    fill: none;
    stroke: #98989a;
    stroke-width: 1.8;
  }

  .bottom__item--add svg {
    stroke: #e8262b;
  }

  .bottom__home {
    grid-column: 1 / -1;
    width: 276px;
    height: 9px;
    margin: 10px 0 0 246px;
    border-radius: 5px;
    background: #fff;
  }
</style>
